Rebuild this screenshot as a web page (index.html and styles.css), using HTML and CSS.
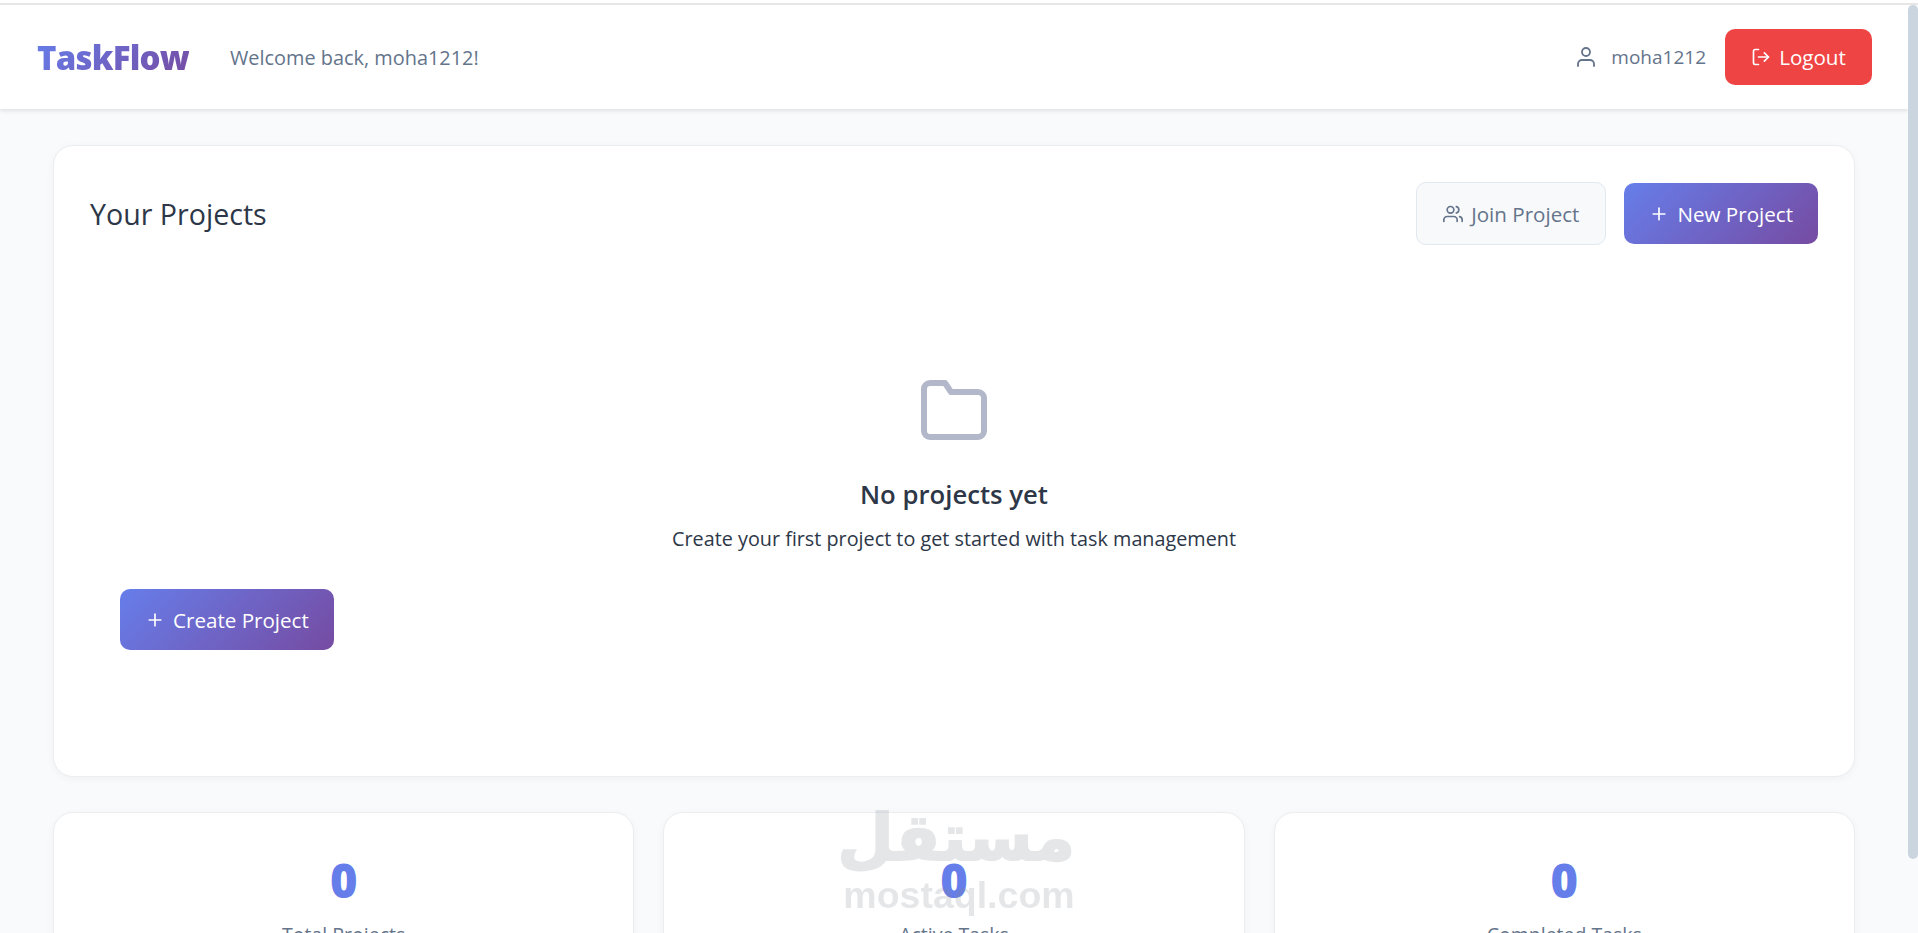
FILE: index.html
```html
<!DOCTYPE html>
<html lang="en">
<head>
  <meta charset="UTF-8" />
  <meta name="viewport" content="width=device-width, initial-scale=1.0"/>
  <title>TaskFlow</title>
  <link rel="stylesheet" href="styles.css">
</head>
<body>

  <div class="browser-line"></div>

  <div class="window">
    <div class="page">
      <header class="topbar">
        <div class="topbar-left">
          <span class="logo">TaskFlow</span>
          <span class="welcome">Welcome back, moha1212!</span>
        </div>
        <div class="topbar-right">
          <span class="user">
            <svg class="icon icon-user" viewBox="0 0 24 24"><path d="M20 21v-2a4 4 0 0 0-4-4H8a4 4 0 0 0-4 4v2"/><circle cx="12" cy="7" r="4"/></svg>
            moha1212
          </span>
          <button class="btn btn-logout">
            <svg class="icon" viewBox="0 0 24 24"><path d="M9 21H5a2 2 0 0 1-2-2V5a2 2 0 0 1 2-2h4"/><polyline points="16 17 21 12 16 7"/><line x1="21" y1="12" x2="9" y2="12"/></svg>
            Logout
          </button>
        </div>
      </header>

      <main class="content">
        <section class="card projects">
          <div class="projects-head">
            <h2>Your Projects</h2>
            <div class="projects-actions">
              <button class="btn btn-light">
                <svg class="icon" viewBox="0 0 24 24"><path d="M17 21v-2a4 4 0 0 0-4-4H5a4 4 0 0 0-4 4v2"/><circle cx="9" cy="7" r="4"/><path d="M23 21v-2a4 4 0 0 0-3-3.87"/><path d="M16 3.13a4 4 0 0 1 0 7.75"/></svg>
                Join Project
              </button>
              <button class="btn btn-primary">
                <svg class="icon" viewBox="0 0 24 24"><line x1="12" y1="5" x2="12" y2="19"/><line x1="5" y1="12" x2="19" y2="12"/></svg>
                New Project
              </button>
            </div>
          </div>

          <div class="empty">
            <svg class="icon empty-icon" viewBox="0 0 24 24"><path d="M22 19a2 2 0 0 1-2 2H4a2 2 0 0 1-2-2V5a2 2 0 0 1 2-2h5l2 3h9a2 2 0 0 1 2 2z"/></svg>
            <h3>No projects yet</h3>
            <p>Create your first project to get started with task management</p>
            <button class="btn btn-primary btn-create">
              <svg class="icon" viewBox="0 0 24 24"><line x1="12" y1="5" x2="12" y2="19"/><line x1="5" y1="12" x2="19" y2="12"/></svg>
              Create Project
            </button>
          </div>
        </section>

        <section class="stats">
          <div class="card stat">
            <div class="stat-number">0</div>
            <div class="stat-label">Total Projects</div>
          </div>
          <div class="card stat">
            <div class="stat-number">0</div>
            <div class="stat-label">Active Tasks</div>
          </div>
          <div class="card stat">
            <div class="stat-number">0</div>
            <div class="stat-label">Completed Tasks</div>
          </div>
        </section>
      </main>
    </div>

    <div class="scrollbar"><div class="scrollbar-thumb"></div></div>

    <div class="watermark">
      <div class="watermark-ar" lang="ar" dir="rtl">مستقل</div>
      <div class="watermark-en">mostaql.com</div>
    </div>
  </div>

</body>
</html>
```

FILE: styles.css
```css
* {
  box-sizing: border-box;
}

html, body {
  height: 100%;
}

body {
  margin: 0;
  font-family: "Open Sans", "Noto Sans", sans-serif;
  background: #f8fafc;
  color: #2d3748;
  display: flex;
  flex-direction: column;
  overflow: hidden;
}

.browser-line {
  height: 5px;
  flex: none;
  background: #fff;
  border-top: 3px solid #fff;
  border-bottom: 2px solid #e6e6e6;
}

.window {
  position: relative;
  flex: 1;
  min-height: 0;
  display: flex;
}

.page {
  flex: 1;
  min-width: 0;
  overflow: hidden;
}

.scrollbar {
  width: 10px;
  flex: none;
  background: #f8fafc;
}

.scrollbar-thumb {
  height: 854px;
  background: #cbd5e0;
  border-radius: 5px;
}

.icon {
  width: 20px;
  height: 20px;
  flex: none;
  fill: none;
  stroke: currentColor;
  stroke-width: 2;
  stroke-linecap: round;
  stroke-linejoin: round;
}

.icon-user {
  width: 24px;
  height: 24px;
  stroke-width: 1.8;
}

/* top bar */
.topbar {
  height: 104px;
  background: #fff;
  padding: 0 36px 0 37px;
  display: flex;
  align-items: center;
  justify-content: space-between;
  box-shadow: 0 2px 4px rgba(0, 0, 0, 0.1);
  position: relative;
}

.topbar-left {
  display: flex;
  align-items: center;
  gap: 41px;
}

.logo {
  font-size: 33px;
  font-weight: 800;
  letter-spacing: -0.8px;
  background: linear-gradient(135deg, #667eea, #764ba2);
  -webkit-background-clip: text;
  background-clip: text;
  color: transparent;
}

.welcome {
  font-size: 19.9px;
  color: #64748b;
}

.topbar-right {
  display: flex;
  align-items: center;
  gap: 19px;
}

.user {
  display: flex;
  align-items: center;
  gap: 13px;
  font-size: 19px;
  color: #64748b;
}

/* buttons */
.btn {
  display: inline-flex;
  align-items: center;
  justify-content: center;
  gap: 8px;
  border: none;
  border-radius: 10px;
  font-family: inherit;
  font-size: 20.6px;
  cursor: pointer;
}

.btn-logout {
  width: 147px;
  height: 56px;
  background: #ef4444;
  color: #fff;
}

.btn-primary {
  height: 61px;
  padding: 0 25px;
  background: linear-gradient(135deg, #667eea, #764ba2);
  color: #fff;
}

.btn-light {
  height: 63px;
  padding: 0 26px;
  background: #f8f9fa;
  border: 1px solid #e2e8f0;
  color: #64748b;
}

/* cards */
.content {
  padding: 36px 53px 0 53px;
}

.card {
  background: #fff;
  border: 1px solid #ebedf0;
  border-radius: 20px;
  box-shadow: 0 2px 8px rgba(0, 0, 0, 0.04);
}

.projects {
  height: 632px;
  padding: 36px;
}

.projects-head {
  display: flex;
  align-items: center;
  justify-content: space-between;
}

.projects-head h2 {
  margin: 0;
  font-size: 28.6px;
  font-weight: 500;
}

.projects-actions {
  display: flex;
  align-items: center;
  gap: 18px;
}

.empty {
  padding: 0 30px;
  margin-top: 129px;
  text-align: center;
}

.empty-icon {
  width: 72px;
  height: 72px;
  color: #b2b8c9;
  display: block;
  margin: 0 auto;
}

.empty h3 {
  margin: 31px 0 0;
  font-size: 25.7px;
  font-weight: 600;
}

.empty p {
  margin: 13px 0 0;
  font-size: 19.8px;
}

.btn-create {
  display: flex;
  margin-top: 37px;
}

/* stats */
.stats {
  display: grid;
  grid-template-columns: repeat(3, 1fr);
  gap: 29px;
  margin-top: 35px;
}

.stat {
  height: 160px;
  padding-top: 39px;
  text-align: center;
}

.stat-number {
  font-size: 47px;
  font-weight: 800;
  line-height: 56px;
  color: #667eea;
}

.stat-label {
  margin-top: 13px;
  font-size: 19.5px;
  color: #64748b;
}

/* watermark sits over the page */
.watermark {
  position: absolute;
  left: 843px;
  top: 795px;
  width: 232px;
  text-align: center;
  color: #82878f;
  opacity: 0.2;
  font-weight: 700;
  pointer-events: none;
}

.watermark-ar {
  font-family: "DejaVu Sans", sans-serif;
  font-size: 65px;
  line-height: 76px;
  -webkit-text-stroke: 2px #82878f;
}

.watermark-en {
  font-family: "Liberation Sans", sans-serif;
  font-size: 37.5px;
  line-height: 38px;
}
```
